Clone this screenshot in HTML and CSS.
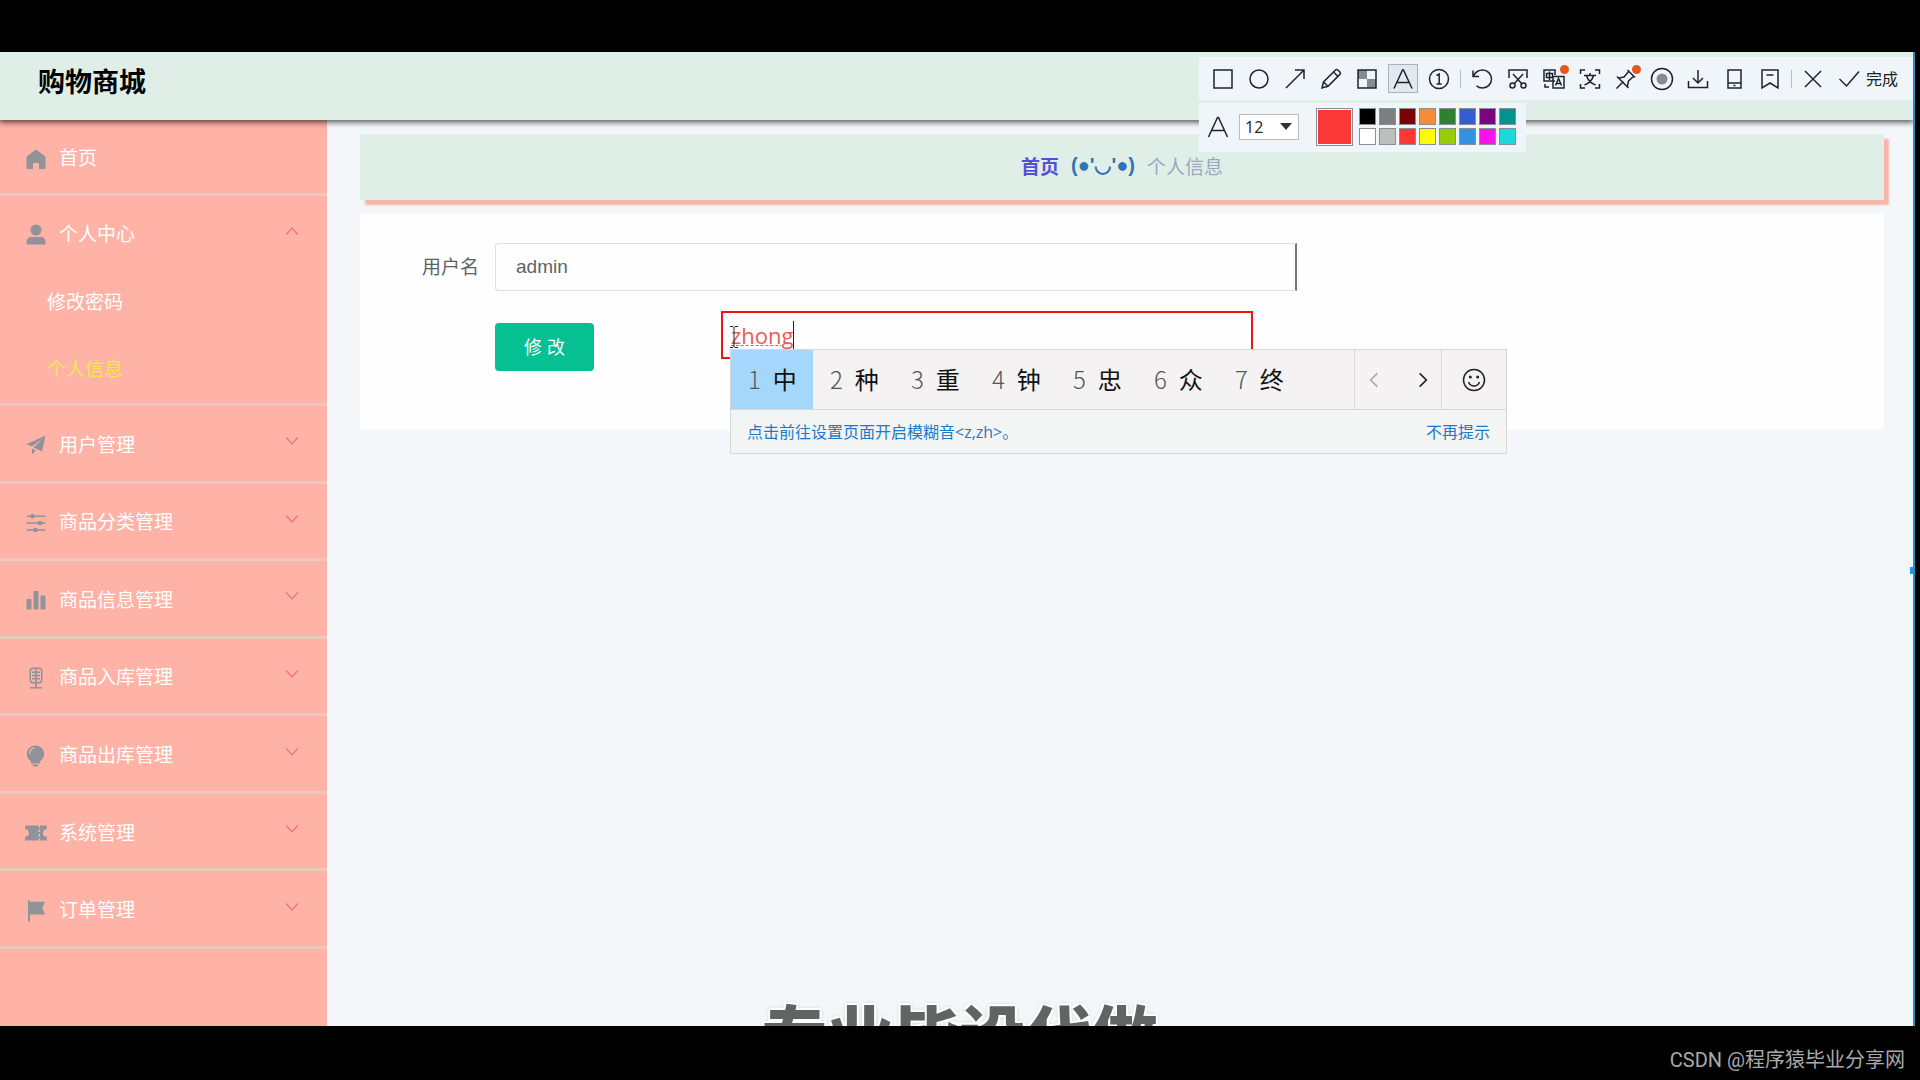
FILE: index.html
```html
<!DOCTYPE html>
<html lang="zh-CN">
<head>
<meta charset="utf-8">
<title>购物商城</title>
<link rel="stylesheet" href="styles.css">
</head>
<body>
<div class="stage">
  <header class="topbar"><h1 class="brand">购物商城</h1></header>
  <div class="layout">
    <nav class="sidebar">
      <ul class="menu">
        <li class="menu-group">
          <a class="menu-item" href="#">
            <svg class="menu-icon" viewBox="0 0 24 24"><path d="M12 2.500 2.500 9.500V21a1 1 0 0 0 1 1H9v-6h6v6h5.500a1 1 0 0 0 1-1V9.500z"/></svg>
            <span class="menu-text">首页</span>
          </a>
        </li>
        <li class="menu-group">
          <a class="menu-item" href="#">
            <svg class="menu-icon" viewBox="0 0 24 24"><circle cx="12" cy="7" r="5.500"/><path d="M2.500 21.500V19c0-3 2-5 5-5h9c3 0 5 2 5 5v2.500z"/></svg>
            <span class="menu-text">个人中心</span>
            <svg class="chevron" viewBox="0 0 12 12"><path d="M1 9l5-5.500L11 9"/></svg>
          </a>
          <ul class="submenu">
            <li><a class="submenu-item" href="#">修改密码</a></li>
            <li><a class="submenu-item active" href="#">个人信息</a></li>
          </ul>
        </li>
      </ul>
      <ul class="menu menu-even">
        <li class="menu-group"><a class="menu-item" href="#">
          <svg class="menu-icon" viewBox="0 0 24 24"><path d="M21.500 2.500 2.500 11.200l5.500 2.300L19 5.500 9.500 14.500l8.500 4z"/><path d="M8 15.500v6l4-4z"/></svg>
          <span class="menu-text">用户管理</span><svg class="chevron" viewBox="0 0 12 12"><path d="M1 3l5 5.500L11 3"/></svg></a></li>
        <li class="menu-group"><a class="menu-item" href="#">
          <svg class="menu-icon" viewBox="0 0 24 24"><path d="M2.500 4.500h19v1.500h-19zM2.500 11.300h19v1.500h-19zM2.500 18.200h19v1.500h-19z"/><circle cx="8.500" cy="5.200" r="2.300"/><circle cx="16" cy="12" r="2.300"/><circle cx="11.500" cy="19" r="2.300"/></svg>
          <span class="menu-text">商品分类管理</span><svg class="chevron" viewBox="0 0 12 12"><path d="M1 3l5 5.500L11 3"/></svg></a></li>
        <li class="menu-group"><a class="menu-item" href="#">
          <svg class="menu-icon" viewBox="0 0 24 24"><rect x="2.500" y="11" width="5" height="10.500" rx="1"/><rect x="9.500" y="3" width="5" height="18.500" rx="1"/><rect x="16.500" y="7.500" width="5" height="14" rx="1"/></svg>
          <span class="menu-text">商品信息管理</span><svg class="chevron" viewBox="0 0 12 12"><path d="M1 3l5 5.500L11 3"/></svg></a></li>
        <li class="menu-group"><a class="menu-item" href="#">
          <svg class="menu-icon" viewBox="0 0 24 24"><path fill-rule="evenodd" d="M9 1.500h6a3.500 3.500 0 0 1 3.500 3.500v9a3.500 3.500 0 0 1-3.500 3.500H9A3.500 3.500 0 0 1 5.500 14V5A3.500 3.500 0 0 1 9 1.500zM9 3a2 2 0 0 0-2 2v9a2 2 0 0 0 2 2h6a2 2 0 0 0 2-2V5a2 2 0 0 0-2-2z"/><path d="M11.200 3h1.600v13h-1.600zM8 5.500h8V7H8zM8 8.700h8v1.500H8zM8 12h8v1.500H8z"/><path d="M11.200 17h1.600v4h5.200v1.500H6V21h5.200z"/></svg>
          <span class="menu-text">商品入库管理</span><svg class="chevron" viewBox="0 0 12 12"><path d="M1 3l5 5.500L11 3"/></svg></a></li>
        <li class="menu-group"><a class="menu-item" href="#">
          <svg class="menu-icon" viewBox="0 0 24 24"><path fill-rule="evenodd" d="M11.500 1.500c5 0 8.700 3.700 8.700 8.500 0 3.200-1.700 5.500-4 7.200V19.500H7V17.200C4.500 15.500 2.800 13.200 2.800 10c0-4.800 3.700-8.500 8.700-8.500zM5 9.500h1.200c.3-3 2-4.800 4.600-5.200V3.200C7.400 3.500 5.100 6 5 9.500z"/><path d="M8.500 20.500h6c0 1.500-1.200 2.200-3 2.200s-3-.7-3-2.200z"/></svg>
          <span class="menu-text">商品出库管理</span><svg class="chevron" viewBox="0 0 12 12"><path d="M1 3l5 5.500L11 3"/></svg></a></li>
        <li class="menu-group"><a class="menu-item" href="#">
          <svg class="menu-icon" viewBox="0 0 24 24"><path d="M1 4.500h13.500v2h1.500v-2h6.800v3.700a3.800 3.800 0 0 0 0 7.600v3.700H16v-2h-1.500v2H1v-3.700a3.800 3.800 0 0 0 0-7.600z"/><path class="cut" d="M14.500 8.500H16v2.500h-1.500zM14.500 13H16v2.500h-1.500z"/></svg>
          <span class="menu-text">系统管理</span><svg class="chevron" viewBox="0 0 12 12"><path d="M1 3l5 5.500L11 3"/></svg></a></li>
        <li class="menu-group"><a class="menu-item" href="#">
          <svg class="menu-icon" viewBox="0 0 24 24"><path d="M4 1.500h2v1.300h15l-2.700 6.200L21 15.500H6V22.500H4z"/></svg>
          <span class="menu-text">订单管理</span><svg class="chevron" viewBox="0 0 12 12"><path d="M1 3l5 5.500L11 3"/></svg></a></li>
      </ul>
    </nav>
    <main class="content">
      <div class="breadcrumb">
        <a class="crumb-home" href="#">首页</a>
        <span class="crumb-face">(●'◡'●)</span>
        <span class="crumb-here">个人信息</span>
      </div>
      <form class="card">
        <label class="field-label" for="username">用户名</label>
        <input class="field-input" id="username" type="text" value="admin">
        <button class="submit" type="button">修 改</button>
      </form>
    </main>
  </div>

  <p class="caption">专业毕设代做</p>
  <span class="edge-mark"></span>

  <div class="annotation"><span class="typed">zhong</span><span class="caret"></span>
    <svg class="ibeam" viewBox="0 0 10 24"><path d="M1 1.500h3l1 1 1-1h3M5 2.500v19M1 22.500h3l1-1 1 1h3"/></svg>
  </div>

  <section class="ime">
    <ol class="candidates">
      <li class="candidate picked"><span class="num">1</span>中</li>
      <li class="candidate"><span class="num">2</span>种</li>
      <li class="candidate"><span class="num">3</span>重</li>
      <li class="candidate"><span class="num">4</span>钟</li>
      <li class="candidate"><span class="num">5</span>忠</li>
      <li class="candidate"><span class="num">6</span>众</li>
      <li class="candidate"><span class="num">7</span>终</li>
    </ol>
    <div class="ime-pager">
      <button class="ime-btn dim" type="button" aria-label="上一页"><svg viewBox="0 0 24 24"><path d="M16 4 8 12l8 8"/></svg></button>
      <button class="ime-btn" type="button" aria-label="下一页"><svg viewBox="0 0 24 24"><path d="M8 4l8 8-8 8"/></svg></button>
    </div>
    <button class="ime-btn ime-emoji" type="button" aria-label="表情"><svg viewBox="0 0 24 24"><circle cx="12" cy="12" r="10.500"/><path d="M6.500 14c1 2.600 3 4 5.500 4s4.500-1.400 5.500-4"/><circle class="dot" cx="8.300" cy="9" r="1.500"/><circle class="dot" cx="15.700" cy="9" r="1.500"/></svg></button>
    <div class="ime-tip"><a href="#">点击前往设置页面开启模糊音&lt;z,zh&gt;。</a><a href="#">不再提示</a></div>
  </section>

  <div class="capture">
    <div class="tools">
      <button class="tool" type="button" aria-label="矩形"><svg viewBox="0 0 24 24"><rect x="3" y="3" width="18" height="18"/></svg></button>
      <button class="tool" type="button" aria-label="椭圆"><svg viewBox="0 0 24 24"><circle cx="12" cy="12" r="9"/></svg></button>
      <button class="tool" type="button" aria-label="箭头"><svg viewBox="0 0 24 24"><path d="M3 21 21 3M12 3h9v9"/></svg></button>
      <button class="tool" type="button" aria-label="画笔"><svg viewBox="0 0 24 24"><path d="M3 21l1.500-6L16.500 3c.8-.8 1.600-.8 2.400 0l2 2c.8.8.8 1.600 0 2.400L9 19.300zM14.500 5l4.500 4.500M4.500 15l4.500 4.300"/></svg></button>
      <button class="tool" type="button" aria-label="马赛克"><svg viewBox="0 0 24 24"><path class="shade" d="M3 3h9v9H3zM12 12h9v9h-9z"/><rect x="3" y="3" width="18" height="18"/></svg></button>
      <button class="tool selected" type="button" aria-label="文字"><svg viewBox="0 0 24 24"><path d="M3 21.500 11.500 3h1L21 21.500M6 15.500h12"/></svg></button>
      <button class="tool" type="button" aria-label="序号"><svg viewBox="0 0 24 24"><circle cx="12" cy="12" r="9.500"/><path d="M9.500 8.500 12.200 7v10M9.500 17h5.200"/></svg></button>
      <span class="divider"></span>
      <button class="tool" type="button" aria-label="撤销"><svg viewBox="0 0 24 24"><path d="M3 3.500v6h6M3.500 9C5.500 5 9 3 12.500 3a9 9 0 0 1 0 18c-2.500 0-4.500-.8-6-2.300"/></svg></button>
      <button class="tool" type="button" aria-label="裁剪"><svg viewBox="0 0 24 24"><path d="M3 11V3h18v8M7 7l9 10M17 7 8 17"/><circle cx="6.500" cy="18.500" r="2.500"/><circle cx="17.500" cy="18.500" r="2.500"/></svg></button>
      <button class="tool" type="button" aria-label="翻译"><svg viewBox="0 0 24 24"><path d="M13 14H2V3h11v5M4.500 6.500h6v4h-6zM7.500 4.500V13M11 9.500h11V21H11zM13.500 18.500l3-7 3 7M14.500 16.500h4M3 17v3h4"/></svg><i class="badge"></i></button>
      <button class="tool" type="button" aria-label="文字识别"><svg viewBox="0 0 24 24"><path d="M2.500 7V3H7M17 3h4.500v4M21.500 17v4H17M7 21H2.500v-4M6 8.500h12M12 6v2.500M15.500 8.500c-1 4-4 7.500-9 9.500M8.500 8.500c1 4 4 7.500 9 9.500"/></svg></button>
      <button class="tool" type="button" aria-label="钉住"><svg viewBox="0 0 24 24"><path d="M2.500 21.500l7-7M3 9.500 14.500 21M5 11l5-1 5-6M13.500 19l1-5 5.500-5M13.500 3l7.500 7.500"/></svg><i class="badge"></i></button>
      <button class="tool" type="button" aria-label="录屏"><svg viewBox="0 0 24 24"><circle cx="12" cy="12" r="10.500"/><circle class="shade" cx="12" cy="12" r="5.500"/></svg></button>
      <button class="tool" type="button" aria-label="保存"><svg viewBox="0 0 24 24"><path d="M12 3v13M7 11l5 5 5-5M2.500 14v6.500h19V14"/></svg></button>
      <button class="tool" type="button" aria-label="发送到手机"><svg viewBox="0 0 24 24"><path d="M6 3h13v18H6zM6 16h13M11.500 18.500h2"/></svg></button>
      <button class="tool" type="button" aria-label="收藏"><svg viewBox="0 0 24 24"><path d="M4 3h16v18l-8-5-8 5zM8.500 8h7"/></svg></button>
      <span class="divider"></span>
      <button class="tool" type="button" aria-label="关闭"><svg viewBox="0 0 24 24"><path d="M4 4l16 16M20 4 4 20"/></svg></button>
      <button class="tool done" type="button"><svg viewBox="0 0 24 24"><path d="M2.500 13l7 7L22 5.500"/></svg>完成</button>
    </div>
    <div class="text-options">
      <svg class="text-glyph" viewBox="0 0 24 24"><path d="M2.500 22 11.500 2.500h1L21.500 22M5.500 15.500h13"/></svg>
      <div class="size-box">
        <select class="size" aria-label="字号"><option>12</option></select>
        <svg class="size-arrow" viewBox="0 0 12 7"><path d="M0 0h12L6 7z"/></svg>
      </div>
      <span class="current"></span>
      <div class="palette">
        <button class="swatch black" type="button" aria-label="黑"></button><button class="swatch gray" type="button" aria-label="灰"></button><button class="swatch maroon" type="button" aria-label="深红"></button><button class="swatch orange" type="button" aria-label="橙"></button><button class="swatch green" type="button" aria-label="绿"></button><button class="swatch blue" type="button" aria-label="蓝"></button><button class="swatch purple" type="button" aria-label="紫"></button><button class="swatch teal" type="button" aria-label="青"></button>
        <button class="swatch white" type="button" aria-label="白"></button><button class="swatch silver" type="button" aria-label="浅灰"></button><button class="swatch red" type="button" aria-label="红"></button><button class="swatch yellow" type="button" aria-label="黄"></button><button class="swatch lime" type="button" aria-label="黄绿"></button><button class="swatch sky" type="button" aria-label="天蓝"></button><button class="swatch magenta" type="button" aria-label="品红"></button><button class="swatch cyan" type="button" aria-label="青蓝"></button>
      </div>
    </div>
  </div>
</div>
<footer class="credit">CSDN @程序猿毕业分享网</footer>
</body>
</html>
```
FILE: styles.css
```css
* { box-sizing: border-box; }

body {
  margin: 0;
  min-height: 100vh;
  padding-top: 52px;
  display: flex;
  flex-direction: column;
  background: #000;
  font-family: "Liberation Sans", "Noto Sans CJK SC", sans-serif;
  font-size: 19px;
}

ul, ol { margin: 0; padding: 0; list-style: none; }
a { text-decoration: none; }
button { font-family: inherit; border: 0; padding: 0; background: none; }

.stage {
  flex: 1;
  position: relative;
  display: flex;
  flex-direction: column;
  margin-right: 5px;
  border-right: 2px solid #2b8cc4;
  background: #f4f7f9;
  overflow: hidden;
}

.topbar {
  height: 68px;
  padding: 11px 38px;
  background: #dfefe8;
  box-shadow: 0 1px 6px 1px rgba(0, 0, 0, .7);
  z-index: 1;
}
.brand { margin: 0; font-size: 27px; line-height: 40px; color: #000; }

.layout { flex: 1; display: flex; }

/* Sidebar */
.sidebar { flex: 0 0 327px; background: #ffb2a6; }
.menu-even { display: grid; grid-auto-rows: 1fr; min-height: 543px; }
.menu-group { border-bottom: 3px solid #eac8bf; }
.menu-item {
  display: flex;
  align-items: center;
  gap: 11px;
  height: 73px;
  padding: 0 28px 0 24px;
  color: #fff;
}
.menu-even .menu-item { height: 100%; }
.menu-icon { width: 24px; height: 24px; margin-top: 4px; fill: #909399; }
.menu-icon .cut { fill: #ffb2a6; }
.chevron {
  width: 14px;
  height: 14px;
  margin: 0 0 4px auto;
  fill: none;
  stroke: #f0706c;
}
.submenu-item {
  display: block;
  padding-left: 47px;
  line-height: 67px;
  color: #fff;
}
.submenu-item.active { color: #f5e653; }

/* Content */
.content {
  flex: 1;
  display: flex;
  flex-direction: column;
  gap: 13px;
  padding: 14px 29px 14px 33px;
}
.breadcrumb {
  display: flex;
  align-items: center;
  justify-content: center;
  gap: 12px;
  height: 66px;
  padding-bottom: 4px;
  background: #dfefe8;
  box-shadow: 5px 5px 2px #f6b5aa;
}
.crumb-home { font-weight: bold; color: #5050d8; }
.crumb-face { font-weight: bold; font-size: 20px; color: #2f74b5; }
.crumb-here { color: #97a8be; }

.card {
  display: grid;
  grid-template-columns: 119px minmax(0, 802px);
  gap: 30px 16px;
  padding: 30px 0 59px;
  background: #fdfefd;
}
.field-label { line-height: 50px; text-align: right; color: #606266; }
.field-input {
  height: 48px;
  padding: 0 20px;
  border: 1px solid #dcdfe2;
  border-right: 2px solid #777;
  border-radius: 4px 0 0 4px;
  background: #fdfefd;
  font: 19px "Liberation Sans", sans-serif;
  color: #606266;
}
.submit {
  grid-column: 2;
  justify-self: start;
  width: 99px;
  height: 48px;
  padding-bottom: 2px;
  border-radius: 4px;
  background: #06c093;
  color: #fff;
  font-size: 18px;
}

/* Video caption running off the bottom edge */
.caption {
  position: absolute;
  top: 938px;
  left: 0;
  right: 0;
  margin: 0;
  padding-left: 6px;
  text-align: center;
  font-size: 66px;
  line-height: 96px;
  font-weight: 900;
  color: #626463;
  text-shadow: 0 0 2px #fff, 2px 2px 1px #fff, -2px -2px 1px #fff, 2px -2px 1px #fff, -2px 2px 1px #fff, 0 0 4px #777;
}
.edge-mark {
  position: absolute;
  right: 0;
  top: 515px;
  width: 3px;
  height: 7px;
  background: #1c9be6;
}

/* Text annotation being typed */
.annotation {
  position: absolute;
  left: 721px;
  top: 259px;
  width: 532px;
  height: 48px;
  padding: 6px 8px;
  display: flex;
  align-items: flex-start;
  border: 2px solid #ee1518;
}
.typed {
  font: 22px/32px "Open Sans", "Noto Sans", sans-serif;
  color: #ee5a5a;
  text-decoration: underline dashed 1px;
}
.caret { width: 1px; height: 28px; margin-top: 2px; background: #222; }
.ibeam {
  position: absolute;
  left: 6px;
  top: 12px;
  width: 10px;
  height: 24px;
  fill: none;
  stroke: #222;
}

/* Input method window */
.ime {
  position: absolute;
  left: 730px;
  top: 297px;
  width: 777px;
  display: grid;
  grid-template-columns: 1fr auto auto;
  grid-template-rows: 59px 44px;
  border: 1px solid #d6d8d8;
  background: #f4f2f2;
}
.candidates { display: flex; }
.candidate {
  display: flex;
  align-items: center;
  gap: 12px;
  width: 81px;
  padding: 0 0 3px 17px;
  font-size: 24px;
  color: #111;
}
.candidate.picked { width: 82px; background: #a5d6fb; }
.num { font-family: "Noto Sans CJK SC", sans-serif; font-weight: 300; color: #555; }
.ime-pager { display: flex; border-left: 1px solid #d6d8d8; }
.ime-btn { width: 43px; display: grid; place-items: center; }
.ime-btn.dim { padding-right: 6px; }
.ime-pager .ime-btn:last-child { padding-left: 6px; }
.ime-btn svg { width: 20px; height: 20px; fill: none; stroke: #222; stroke-width: 2; }
.ime-btn.dim svg { stroke: #aaa; }
.ime-emoji { width: 65px; border-left: 1px solid #d6d8d8; }
.ime-btn.ime-emoji svg { width: 24px; height: 24px; stroke-width: 1.5; }
.ime-btn .dot { fill: #222; stroke: none; }
.ime-tip {
  grid-column: 1 / -1;
  display: flex;
  align-items: center;
  justify-content: space-between;
  padding: 0 16px 2px;
  border-top: 1px solid #d6d8d8;
  background: #f3f4f4;
  font-size: 16px;
}
.ime-tip a { color: #1c7ac8; font-family: "Open Sans", "Noto Sans CJK SC", sans-serif; }

/* Screen capture toolbar */
.capture {
  position: absolute;
  right: 0;
  top: 5px;
  width: 714px;
  display: flex;
  flex-direction: column;
  align-items: flex-start;
  gap: 3px;
  z-index: 2;
}
.tools {
  width: 100%;
  height: 43px;
  display: flex;
  align-items: center;
  padding-left: 6px;
  background: #f0f5fa;
}
.tool {
  position: relative;
  width: 36px;
  height: 27px;
  display: flex;
  align-items: center;
  justify-content: center;
  color: #222;
}
.tool svg { width: 24px; height: 24px; flex: none; fill: none; stroke: #1d2430; stroke-width: 1.5; }
.tool .shade { fill: #868a92; stroke: none; }
.tool.selected { width: 28px; margin: 0 4px; outline: 1px solid #aab2ba; background: #e2e8ee; }
.badge {
  position: absolute;
  right: 3px;
  top: 0;
  width: 9px;
  height: 9px;
  border-radius: 50%;
  background: #e2581c;
}
.divider { width: 1px; height: 18px; margin: 0 3px; background: #b9bec4; }
.tool.done { width: auto; padding: 0 0 2px 6px; gap: 5px; font-size: 16px; }

.text-options {
  display: flex;
  align-items: center;
  height: 49px;
  padding: 0 10px 2px 7px;
  background: #f0f5fa;
}
.text-glyph { width: 24px; height: 24px; fill: none; stroke: #1d2430; stroke-width: 1.5; }
.size-box { display: grid; align-items: center; margin: 0 17px 0 9px; }
.size {
  grid-area: 1 / 1;
  appearance: none;
  width: 60px;
  height: 26px;
  padding: 0 5px;
  border: 1px solid #b8bcc0;
  background: #fff;
  font: 16px "Open Sans", sans-serif;
  color: #222;
}
.size-arrow { grid-area: 1 / 1; justify-self: end; width: 12px; height: 7px; margin-right: 7px; fill: #333; }
.current {
  width: 37px;
  height: 38px;
  margin-right: 6px;
  border: 1px solid #8a8f94;
  background: #fb3838;
  box-shadow: inset 0 0 0 1px #fff;
}
.palette { display: grid; grid-template-columns: repeat(8, 17px); gap: 3px; }
.swatch { height: 17px; border: 1px solid #8a8f94; }
.black { background: #000; }
.gray { background: #7d7f7e; }
.maroon { background: #7a0204; }
.orange { background: #f88a38; }
.green { background: #2f8030; }
.blue { background: #365bd2; }
.purple { background: #7c0480; }
.teal { background: #049490; }
.white { background: #fff; }
.silver { background: #bdbebe; }
.red { background: #fb3838; }
.yellow { background: #fdfd02; }
.lime { background: #98cc04; }
.sky { background: #3492e2; }
.magenta { background: #f614ea; }
.cyan { background: #1cd8d8; }

.credit {
  height: 54px;
  padding: 10px 15px;
  text-align: right;
  font-family: Roboto, "Noto Sans CJK SC", sans-serif;
  font-size: 20px;
  line-height: 48px;
  color: #aaa;
}
```
